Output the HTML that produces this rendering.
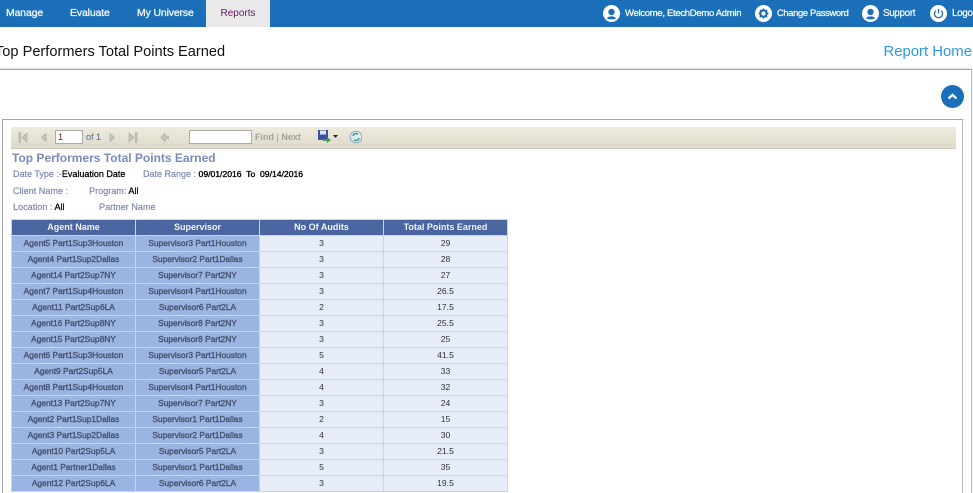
<!DOCTYPE html>
<html><head><meta charset="utf-8"><style>
*{box-sizing:border-box}
html,body{margin:0;padding:0;width:973px;height:493px;overflow:hidden;background:#fff;font-family:"Liberation Sans",sans-serif}
.a{position:absolute;white-space:nowrap}
.nav{position:absolute;left:0;top:0;width:973px;height:27px;background:#1a6fb8}
.nv{position:absolute;top:0;height:27px;line-height:27px;color:#f1f6fb;font-size:10.5px;white-space:nowrap;-webkit-text-stroke:.3px #f1f6fb;letter-spacing:-.15px}
.ic{position:absolute;top:5px;width:17px;height:17px}
.lb{position:absolute;font-size:9.1px;color:#7a86ae;white-space:nowrap;line-height:12px;-webkit-text-stroke:.15px #7a86ae}
.lb b{color:#000;font-weight:normal;-webkit-text-stroke:.25px #000}
table{position:absolute;left:11px;top:219px;width:497px;border-collapse:collapse;table-layout:fixed;font-size:8.6px}
td,th{border:1px solid #d3d3d3;height:16px;padding:0 0 1px;text-align:center;line-height:13px;overflow:hidden;white-space:nowrap}
th{background:#4a659f;color:#f2f4fa;font-size:9px}
td{background:#e6edf9;color:#333}
td.k{background:#9bb5e3;color:#4a5570;font-size:8.4px;-webkit-text-stroke:.4px #4a5570}
</style></head><body>
<div class="nav"></div>
<div class="nv" style="left:6px">Manage</div>
<div class="nv" style="left:70px">Evaluate</div>
<div class="nv" style="left:137px">My Universe</div>
<div class="a" style="left:206px;top:0;width:64px;height:27px;background:#e9e9e9;line-height:27px;text-align:center;font-size:10px;color:#6a1a63">Reports</div>

<svg class="ic" style="left:603px" viewBox="0 0 17 17"><circle cx="8.5" cy="8.5" r="8.5" fill="#fff"/><circle cx="8.5" cy="7" r="3.2" fill="#1a6fb8"/><path d="M4 13.2c1-2.400 8-2.400 9 0-2 1.600-7 1.600-9 0z" fill="#1a6fb8"/></svg>
<div class="nv" style="left:625px;font-size:9.5px;letter-spacing:-.3px">Welcome, EtechDemo Admin</div>
<svg class="ic" style="left:755px" viewBox="0 0 17 17"><circle cx="8.5" cy="8.5" r="8.5" fill="#fff"/><circle cx="8.5" cy="8.5" r="3.2" fill="none" stroke="#1a6fb8" stroke-width="2.2"/><path d="M8.500 3.500v2M8.500 11.500v2M3.500 8.500h2M11.500 8.500h2M5 5l1.400 1.400M10.600 10.600L12 12M5 12l1.400-1.400M10.600 6.400L12 5" stroke="#1a6fb8" stroke-width="1.6"/></svg>
<div class="nv" style="left:777px;font-size:9.3px;letter-spacing:-.3px">Change Password</div>
<svg class="ic" style="left:862px" viewBox="0 0 17 17"><circle cx="8.5" cy="8.5" r="8.5" fill="#fff"/><circle cx="8.5" cy="7" r="3.2" fill="#1a6fb8"/><path d="M4 13.2c1-2.400 8-2.400 9 0-2 1.600-7 1.600-9 0z" fill="#1a6fb8"/></svg>
<div class="nv" style="left:883px;font-size:9.8px;letter-spacing:-.3px">Support</div>
<svg class="ic" style="left:930px" viewBox="0 0 17 17"><circle cx="8.5" cy="8.5" r="8.5" fill="#fff"/><path d="M5.800 5.800a4 4 0 1 0 5.400 0" fill="none" stroke="#1a6fb8" stroke-width="1.3"/><path d="M8.500 4v4.400" stroke="#1a6fb8" stroke-width="1.3"/></svg>
<div class="nv" style="left:952px;font-size:9.8px;letter-spacing:-.3px">Logout</div>

<div class="a" style="left:-5px;top:42px;font-size:14.6px;line-height:20px;color:#111">Top Performers Total Points Earned</div>
<div class="a" style="right:1px;top:42px;font-size:14.9px;line-height:20px;color:#2a9be3">Report Home</div>

<div class="a" style="left:0;top:69px;width:972px;height:424px;border-top:1px solid #a8a8a8;border-right:1px solid #bbb;box-shadow:0 -1px 1px #ddd"></div>
<svg class="a" style="left:941px;top:85px" width="23" height="23" viewBox="0 0 23 23"><circle cx="11.5" cy="11.5" r="11.5" fill="#1a6fb8"/><path d="M7.500 13.500l4-3.600 4 3.600" fill="none" stroke="#fff" stroke-width="2.2"/></svg>

<div class="a" style="left:2px;top:119px;width:961px;height:374px;border-top:1px solid #a5a5a5;border-left:1px solid #a5a5a5;border-right:1px solid #bbb"></div>
<div class="a" style="left:11px;top:127px;width:945px;height:22px;background:linear-gradient(#efecdf,#e6e3d4 45%,#dedbcc);border-bottom:1px solid #cfccbe"></div>

<svg class="a" style="left:11px;top:127px" width="170" height="22" viewBox="0 0 170 22"><g fill="#c6c6bd" stroke="#a5a59c" stroke-width=".6"><path d="M8 5.500h1.500v10H8zM16 6v9l-5-4.500z"/><path d="M35 6.500v8l-4.500-4z"/><path d="M99 6.500v8l4.500-4z"/><path d="M118 6v9l5-4.500zM124.500 5.500h1.500v10h-1.500z"/><path d="M150 10.500l4-4v2.500h3.500v3h-3.500v2.500z"/></g></svg>
<div class="a" style="left:55px;top:130px;width:28px;height:14px;border:1px solid #aaa;background:#fff;font-size:9px;line-height:12px;padding-left:2px;color:#8a1c1c">1</div>
<div class="a" style="left:86px;top:131px;font-size:9px;line-height:12px;color:#4a6c8c">of 1</div>
<div class="a" style="left:189px;top:130px;width:63px;height:14px;border:1px solid #aaa;background:#fff"></div>
<div class="a" style="left:255px;top:131px;font-size:9px;line-height:12px;color:#a3a39b;font-weight:bold">Find <span style="color:#b09070;font-weight:normal">|</span> Next</div>
<svg class="a" style="left:317px;top:129px" width="45" height="16" viewBox="0 0 45 16"><rect x="1" y="1" width="10" height="10" fill="#3c4fa0"/><rect x="3" y="1.500" width="6" height="4" fill="#dfe3f3"/><path d="M6 10h4V8l4 3-4 3v-2H6z" fill="#3da34a"/><path d="M16 6h5l-2.500 3z" fill="#222"/><circle cx="39" cy="8" r="5.800" fill="#dce8f6" stroke="#8fa8cf"/><path d="M36 7a3.300 3.300 0 0 1 5-2M42 9a3.300 3.300 0 0 1-5 2" fill="none" stroke="#3da34a" stroke-width="1.500"/></svg>

<div class="a" style="left:12px;top:151px;font-size:12px;line-height:14px;font-weight:bold;color:#7a8bb8">Top Performers Total Points Earned</div>
<div class="lb" style="left:13px;top:168px;font-size:9px">Date Type :-<b>Evaluation Date</b></div>
<div class="lb" style="left:143px;top:168px;font-size:9px">Date Range : <b style="font-size:8.6px;-webkit-text-stroke:.35px #000">09/01/2016&nbsp; To&nbsp; 09/14/2016</b></div>
<div class="lb" style="left:13px;top:185px">Client Name :</div>
<div class="lb" style="left:89px;top:185px">Program: <b>All</b></div>
<div class="lb" style="left:13px;top:201px">Location : <b>All</b></div>
<div class="lb" style="left:99px;top:201px">Partner Name</div>

<table><colgroup><col style="width:124px"><col style="width:124px"><col style="width:124px"><col style="width:124px"></colgroup>
<tr><th>Agent Name</th><th>Supervisor</th><th>No Of Audits</th><th>Total Points Earned</th></tr>
<tr><td class="k">Agent5 Part1Sup3Houston</td><td class="k">Supervisor3 Part1Houston</td><td>3</td><td>29</td></tr>
<tr><td class="k">Agent4 Part1Sup2Dallas</td><td class="k">Supervisor2 Part1Dallas</td><td>3</td><td>28</td></tr>
<tr><td class="k">Agent14 Part2Sup7NY</td><td class="k">Supervisor7 Part2NY</td><td>3</td><td>27</td></tr>
<tr><td class="k">Agent7 Part1Sup4Houston</td><td class="k">Supervisor4 Part1Houston</td><td>3</td><td>26.5</td></tr>
<tr><td class="k">Agent11 Part2Sup6LA</td><td class="k">Supervisor6 Part2LA</td><td>2</td><td>17.5</td></tr>
<tr><td class="k">Agent16 Part2Sup8NY</td><td class="k">Supervisor8 Part2NY</td><td>3</td><td>25.5</td></tr>
<tr><td class="k">Agent15 Part2Sup8NY</td><td class="k">Supervisor8 Part2NY</td><td>3</td><td>25</td></tr>
<tr><td class="k">Agent6 Part1Sup3Houston</td><td class="k">Supervisor3 Part1Houston</td><td>5</td><td>41.5</td></tr>
<tr><td class="k">Agent9 Part2Sup5LA</td><td class="k">Supervisor5 Part2LA</td><td>4</td><td>33</td></tr>
<tr><td class="k">Agent8 Part1Sup4Houston</td><td class="k">Supervisor4 Part1Houston</td><td>4</td><td>32</td></tr>
<tr><td class="k">Agent13 Part2Sup7NY</td><td class="k">Supervisor7 Part2NY</td><td>3</td><td>24</td></tr>
<tr><td class="k">Agent2 Part1Sup1Dallas</td><td class="k">Supervisor1 Part1Dallas</td><td>2</td><td>15</td></tr>
<tr><td class="k">Agent3 Part1Sup2Dallas</td><td class="k">Supervisor2 Part1Dallas</td><td>4</td><td>30</td></tr>
<tr><td class="k">Agent10 Part2Sup5LA</td><td class="k">Supervisor5 Part2LA</td><td>3</td><td>21.5</td></tr>
<tr><td class="k">Agent1 Partner1Dallas</td><td class="k">Supervisor1 Part1Dallas</td><td>5</td><td>35</td></tr>
<tr><td class="k">Agent12 Part2Sup6LA</td><td class="k">Supervisor6 Part2LA</td><td>3</td><td>19.5</td></tr>
</table>
</body></html>
